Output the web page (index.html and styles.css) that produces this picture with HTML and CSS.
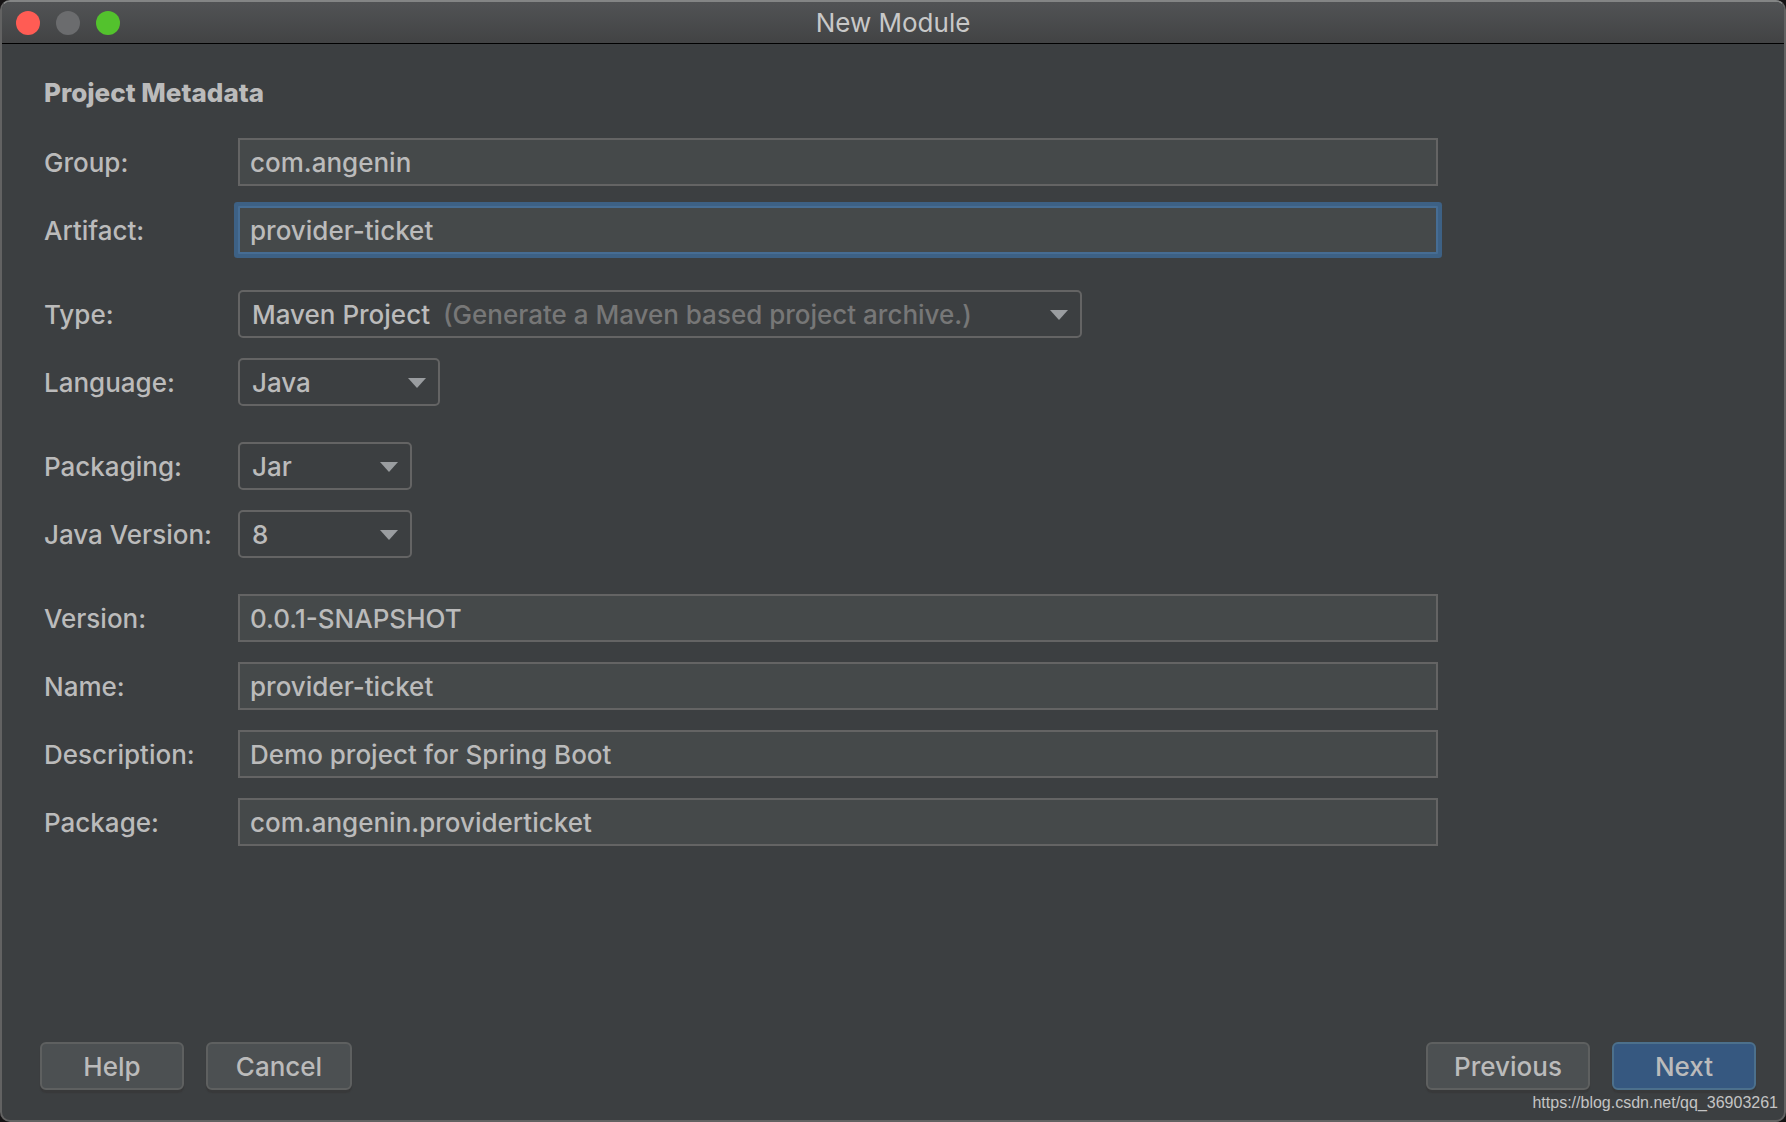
FILE: index.html
```html
<!DOCTYPE html>
<html lang="en">
<head>
<meta charset="utf-8">
<title>New Module</title>
<link rel="stylesheet" href="styles.css">
</head>
<body>
<div class="window">
  <header class="titlebar">
    <div class="lights">
      <button class="light light-close" type="button" aria-label="Close"></button>
      <button class="light light-minimize" type="button" aria-label="Minimize" disabled></button>
      <button class="light light-zoom" type="button" aria-label="Zoom"></button>
    </div>
    <h1 class="title">New Module</h1>
  </header>
  <form class="dialog">
    <h2 class="heading">Project Metadata</h2>
    <div class="groups">
      <div class="group">
        <div class="row"><label for="group">Group:</label><input class="field" id="group" type="text" value="com.angenin"></div>
        <div class="row"><label for="artifact">Artifact:</label><input class="field field-active" id="artifact" type="text" value="provider-ticket"></div>
      </div>
      <div class="group">
        <div class="row"><label for="type">Type:</label>
          <div class="combo combo-wide"><select id="type"><option>Maven Project</option></select><span class="hint">(Generate a Maven based project archive.)</span><svg class="arrow" viewBox="0 0 18 10"><path d="M0 0h18l-9 10z"/></svg></div>
        </div>
        <div class="row"><label for="language">Language:</label>
          <div class="combo combo-medium"><select id="language"><option>Java</option></select><svg class="arrow" viewBox="0 0 18 10"><path d="M0 0h18l-9 10z"/></svg></div>
        </div>
      </div>
      <div class="group">
        <div class="row"><label for="packaging">Packaging:</label>
          <div class="combo combo-small"><select id="packaging"><option>Jar</option></select><svg class="arrow" viewBox="0 0 18 10"><path d="M0 0h18l-9 10z"/></svg></div>
        </div>
        <div class="row"><label for="java">Java Version:</label>
          <div class="combo combo-small"><select id="java"><option>8</option></select><svg class="arrow" viewBox="0 0 18 10"><path d="M0 0h18l-9 10z"/></svg></div>
        </div>
      </div>
      <div class="group">
        <div class="row"><label for="version">Version:</label><input class="field" id="version" type="text" value="0.0.1-SNAPSHOT"></div>
        <div class="row"><label for="name">Name:</label><input class="field" id="name" type="text" value="provider-ticket"></div>
        <div class="row"><label for="description">Description:</label><input class="field" id="description" type="text" value="Demo project for Spring Boot"></div>
        <div class="row"><label for="package">Package:</label><input class="field" id="package" type="text" value="com.angenin.providerticket"></div>
      </div>
    </div>
    <footer class="actions">
      <button class="button" type="button">Help</button>
      <button class="button button-cancel" type="button">Cancel</button>
      <span class="spacer"></span>
      <button class="button button-wide" type="button">Previous</button>
      <button class="button button-primary" type="submit">Next</button>
    </footer>
  </form>
  <span class="credit">https://blog.csdn.net/qq_36903261</span>
</div>
</body>
</html>
```
FILE: styles.css
```css
* {
  box-sizing: border-box;
}

body {
  margin: 0;
  background: #151314;
  color: #bbbbbb;
  font: 500 26px/32px Inter, "Liberation Sans", sans-serif;
}

.window {
  position: relative;
  display: flex;
  flex-direction: column;
  min-height: 100vh;
  border: 2px solid #626262;
  border-top-color: #838585;
  border-radius: 10px;
  background: #3c3f41;
  overflow: hidden;
}

.titlebar {
  display: grid;
  grid-template-columns: 1fr auto 1fr;
  align-items: center;
  height: 42px;
  padding: 0 14px;
  border-bottom: 1px solid #000000;
  background: linear-gradient(#515355, #424344);
}

.lights {
  display: flex;
  gap: 16px;
}

.light {
  width: 24px;
  height: 24px;
  padding: 0;
  border: 0;
  border-radius: 50%;
}

.light-close {
  background: #ff5c54;
}

.light-minimize {
  background: #6b6c6e;
}

.light-zoom {
  background: #53c22d;
}

.title,
.heading {
  margin: 0;
  font-size: 26px;
  line-height: 32px;
}

.title {
  font-weight: 400;
  color: #c8c8c8;
}

.dialog {
  display: flex;
  flex: 1;
  flex-direction: column;
  padding: 33px 28px 30px 38px;
}

.heading {
  padding-left: 4px;
  font-weight: 800;
}

.groups {
  display: flex;
  flex-direction: column;
  gap: 36px;
  max-width: 1398px;
  padding: 29px 0 36px 4px;
}

.group {
  display: flex;
  flex-direction: column;
  gap: 20px;
}

.row {
  display: grid;
  grid-template-columns: 194px minmax(0, 1fr);
  align-items: center;
}

.row label {
  padding-top: 2px;
}

.field {
  width: 100%;
  height: 48px;
  padding: 0 10px;
  border: 2px solid #646464;
  border-radius: 0;
  background: #45494a;
  color: #bbbbbb;
  font: inherit;
  outline: none;
}

.field-active {
  border-color: #466d94;
  box-shadow: 0 0 0 4px #3d6185;
  border-radius: 1px;
}

.combo {
  position: relative;
}

.combo-wide {
  width: 844px;
}

.combo-medium {
  width: 202px;
}

.combo-small {
  width: 174px;
}

.combo select {
  display: block;
  width: 100%;
  height: 48px;
  padding: 2px 12px 0;
  appearance: none;
  border: 2px solid #646464;
  border-radius: 5px;
  background: #3c3f41;
  color: #bbbbbb;
  font: inherit;
}

.hint,
.arrow {
  position: absolute;
  pointer-events: none;
}

.hint {
  top: 9px;
  left: 205px;
  color: #777777;
  white-space: nowrap;
}

.arrow {
  top: 20px;
  right: 14px;
  width: 18px;
  height: 10px;
  fill: #9a9da0;
}

.actions {
  display: flex;
  gap: 22px;
  margin-top: auto;
}

.spacer {
  flex: 1;
}

.button {
  width: 144px;
  height: 48px;
  padding: 2px 0 0;
  border: 2px solid #5e6060;
  border-radius: 6px;
  background: #4c5052;
  box-shadow: 0 3px 1px #38393a;
  color: #bbbbbb;
  font: inherit;
}

.button-cancel {
  width: 146px;
}

.button-wide {
  width: 164px;
}

.button-primary {
  border-color: #4c708c;
  background: #365880;
}

.credit {
  position: absolute;
  right: 6px;
  bottom: 8px;
  color: #c4c4c4;
  font: 16px/18px "Liberation Sans", sans-serif;
}
```
